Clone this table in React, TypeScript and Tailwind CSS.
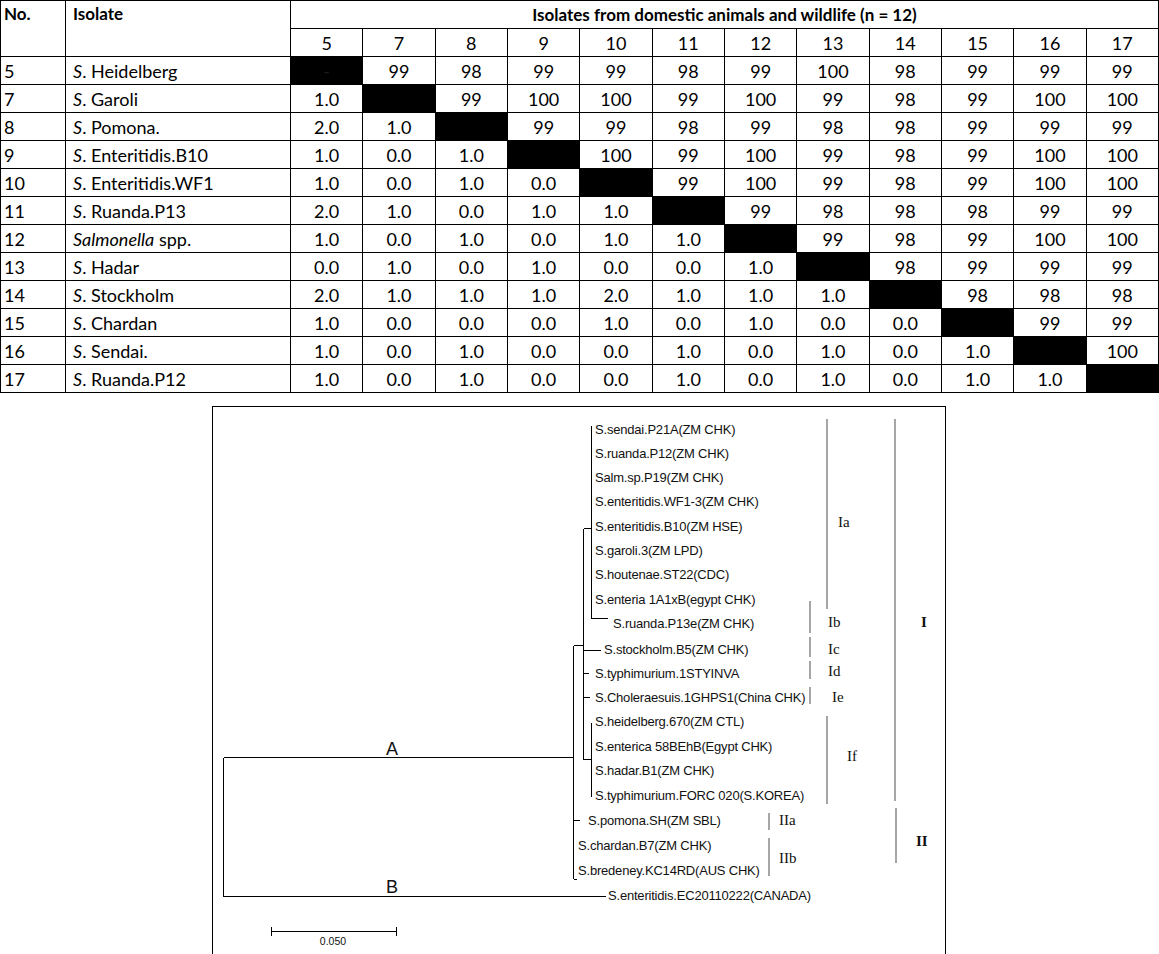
const cols = ['5', '7', '8', '9', '10', '11', '12', '13', '14', '15', '16', '17'];

const rows: { no: string; name: string; genus?: boolean; vals: string }[] = [
  { no: '5', name: 'Heidelberg', vals: '- 99 98 99 99 98 99 100 98 99 99 99' },
  { no: '7', name: 'Garoli', vals: '1.0 x 99 100 100 99 100 99 98 99 100 100' },
  { no: '8', name: 'Pomona.', vals: '2.0 1.0 x 99 99 98 99 98 98 99 99 99' },
  { no: '9', name: 'Enteritidis.B10', vals: '1.0 0.0 1.0 x 100 99 100 99 98 99 100 100' },
  { no: '10', name: 'Enteritidis.WF1', vals: '1.0 0.0 1.0 0.0 x 99 100 99 98 99 100 100' },
  { no: '11', name: 'Ruanda.P13', vals: '2.0 1.0 0.0 1.0 1.0 x 99 98 98 98 99 99' },
  { no: '12', name: 'spp.', genus: true, vals: '1.0 0.0 1.0 0.0 1.0 1.0 x 99 98 99 100 100' },
  { no: '13', name: 'Hadar', vals: '0.0 1.0 0.0 1.0 0.0 0.0 1.0 x 98 99 99 99' },
  { no: '14', name: 'Stockholm', vals: '2.0 1.0 1.0 1.0 2.0 1.0 1.0 1.0 x 98 98 98' },
  { no: '15', name: 'Chardan', vals: '1.0 0.0 0.0 0.0 1.0 0.0 1.0 0.0 0.0 x 99 99' },
  { no: '16', name: 'Sendai.', vals: '1.0 0.0 1.0 0.0 0.0 1.0 0.0 1.0 0.0 1.0 x 100' },
  { no: '17', name: 'Ruanda.P12', vals: '1.0 0.0 1.0 0.0 0.0 1.0 0.0 1.0 0.0 1.0 1.0 x' },
];

// leaf labels of the dendrogram: [text, x, y-centre]
const leaves: [string, number, number][] = [
  ['S.sendai.P21A(ZM CHK)', 595, 428],
  ['S.ruanda.P12(ZM CHK)', 595, 452],
  ['Salm.sp.P19(ZM CHK)', 595, 476],
  ['S.enteritidis.WF1-3(ZM CHK)', 595, 500],
  ['S.enteritidis.B10(ZM HSE)', 595, 525],
  ['S.garoli.3(ZM LPD)', 595, 549],
  ['S.houtenae.ST22(CDC)', 595, 573],
  ['S.enteria 1A1xB(egypt CHK)', 595, 598],
  ['S.ruanda.P13e(ZM CHK)', 613, 622],
  ['S.stockholm.B5(ZM CHK)', 604, 648],
  ['S.typhimurium.1STYINVA', 595, 672],
  ['S.Choleraesuis.1GHPS1(China CHK)', 595, 696],
  ['S.heidelberg.670(ZM CTL)', 595, 720],
  ['S.enterica 58BEhB(Egypt CHK)', 595, 745],
  ['S.hadar.B1(ZM CHK)', 595, 769],
  ['S.typhimurium.FORC 020(S.KOREA)', 595, 794],
  ['S.pomona.SH(ZM SBL)', 588, 819],
  ['S.chardan.B7(ZM CHK)', 578, 844],
  ['S.bredeney.KC14RD(AUS CHK)', 578, 869],
  ['S.enteritidis.EC20110222(CANADA)', 608, 894],
];

// grey cluster bars: [x, y1, y2]
const bars: [number, number, number][] = [
  [827, 418, 608],
  [810, 600, 632],
  [810, 636, 656],
  [810, 660, 678],
  [810, 686, 703],
  [827, 715, 803],
  [895, 418, 800],
  [769, 812, 829],
  [769, 837, 875],
  [896, 807, 862],
];

const groups: [string, number, number, boolean][] = [
  ['Ia', 838, 521, false],
  ['Ib', 828, 621, false],
  ['Ic', 828, 648, false],
  ['Id', 828, 670, false],
  ['Ie', 832, 696, false],
  ['If', 847, 755, false],
  ['I', 921, 621, true],
  ['IIa', 779, 819, false],
  ['IIb', 779, 857, false],
  ['II', 916, 840, true],
];

const Dendrogram = () => (
  <svg width="732" height="547" viewBox="213 406 732 547" className="block">
    <g stroke="#000" strokeWidth="1" fill="none" shapeRendering="crispEdges">
      {/* root */}
      <path d="M223.5 756.5 V895.5" />
      <path d="M223.5 756.5 H573.5" />
      <path d="M223.5 895.5 H606" />
      {/* cluster A */}
      <path d="M573.5 644.5 V878" />
      <path d="M573.5 644.5 H583.5" />
      <path d="M583.5 527.5 V758.5" />
      <path d="M583.5 527.5 H591.5" />
      <path d="M591.5 425 V617.5 H608" />
      <path d="M583.5 649.5 H601" />
      <path d="M583.5 672.5 H589" />
      <path d="M583.5 696.5 H590" />
      <path d="M583.5 758.5 H591.5" />
      <path d="M591.5 722 V796" />
      <path d="M573.5 819.5 H580" />
      <path d="M573.5 878 H577" />
      {/* scale bar */}
      <path d="M271 930.5 H397" />
      <path d="M271.5 926 V935" />
      <path d="M396.5 926 V935" />
    </g>
    <g stroke="#a6a6a6" strokeWidth="2" shapeRendering="crispEdges">
      {bars.map(([x, a, b], i) => (
        <line key={i} x1={x} x2={x} y1={a} y2={b} />
      ))}
    </g>
    <g fontFamily="'Liberation Sans', Arial, sans-serif" fontSize="13" fill="#111" letterSpacing="-0.2">
      {leaves.map(([t, x, y]) => (
        <text key={t} x={x} y={y + 4.5}>
          {t}
        </text>
      ))}
    </g>
    <g fontFamily="'Liberation Serif', 'Times New Roman', serif" fontSize="15" fill="#111">
      {groups.map(([t, x, y, b]) => (
        <text key={t} x={x} y={y + 5} fontWeight={b ? 700 : 400}>
          {t}
        </text>
      ))}
    </g>
    <g fontFamily="'Liberation Sans', Arial, sans-serif" fill="#111">
      <text x="392" y="754" fontSize="18" textAnchor="middle">A</text>
      <text x="392" y="892" fontSize="18" textAnchor="middle">B</text>
      <text x="333" y="944" fontSize="10.5" textAnchor="middle">0.050</text>
    </g>
  </svg>
);

export default function App() {
  return (
    <div className="w-[1159px] h-[954px] bg-white text-black font-['Lato',sans-serif] overflow-hidden">
      <table className="w-[1159px] table-fixed border-collapse text-[18px] leading-none">
        <colgroup>
          <col className="w-[65px]" />
          <col className="w-[225px]" />
          {cols.map((c) => (
            <col key={c} />
          ))}
        </colgroup>
        <thead>
          <tr className="h-[28px]">
            <th rowSpan={2} className="border border-black align-top text-left font-bold text-[17px] pl-[3px] pt-[4px]">
              No.
            </th>
            <th rowSpan={2} className="border border-black align-top text-left font-bold text-[17px] pl-[7px] pt-[4px]">
              Isolate
            </th>
            <th colSpan={12} className="border border-black font-bold text-[17px] text-center">
              Isolates from domestic animals and wildlife (n = 12)
            </th>
          </tr>
          <tr className="h-[28px]">
            {cols.map((c) => (
              <td key={c} className="border border-black text-center">
                {c}
              </td>
            ))}
          </tr>
        </thead>
        <tbody>
          {rows.map((r) => (
            <tr key={r.no} className="h-[28px]">
              <td className="border border-black pl-[3px]">{r.no}</td>
              <td className="border border-black pl-[7px]">
                {r.genus ? (
                  <>
                    <i>Salmonella</i> {r.name}
                  </>
                ) : (
                  <>
                    <i>S</i>. {r.name}
                  </>
                )}
              </td>
              {r.vals.split(' ').map((v, i) =>
                v === 'x' || v === '-' ? (
                  <td key={i} className="border border-black bg-black text-center text-[#1c1c1c]">
                    {v === '-' ? '-' : ''}
                  </td>
                ) : (
                  <td key={i} className="border border-black text-center">
                    {v}
                  </td>
                ),
              )}
            </tr>
          ))}
        </tbody>
      </table>
      <div className="ml-[212px] mt-[13px] w-[734px] h-[549px] border border-black">
        <Dendrogram />
      </div>
    </div>
  );
}
